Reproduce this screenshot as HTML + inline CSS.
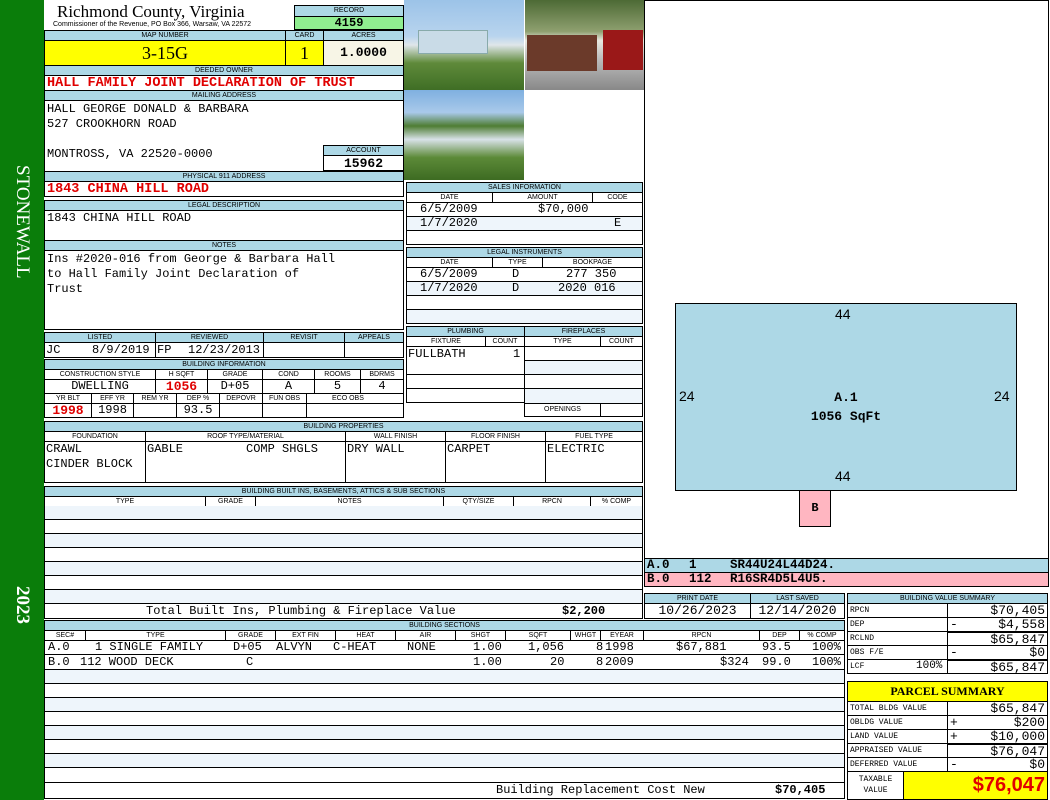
<!DOCTYPE html>
<html><head><meta charset="utf-8"><style>
*{margin:0;padding:0;box-sizing:border-box}
body{width:1050px;height:800px;position:relative;background:#fff;overflow:hidden;font-family:"Liberation Mono",monospace;font-size:12px;color:#000}
div,span{position:absolute}
.h{background:#add8e6;border:1px solid #000;font-family:"Liberation Sans",sans-serif;font-size:7px;text-align:center;line-height:9px;white-space:nowrap;overflow:hidden}
.c{border:1px solid #000;white-space:nowrap;overflow:hidden;line-height:13px;padding:0 2px}
.ct{text-align:center}.r{text-align:right}
.red{color:#e00000;font-weight:bold}
.lb{background:#eef5fb}
.rw{border-bottom:1px solid #000;border-left:1px solid #000;border-right:1px solid #000;white-space:pre}
.rw span,.c span{top:0;white-space:pre}
</style></head><body>
<div style="left:0;top:0;width:44px;height:800px;background:#0a7d0a"></div>
<div style="left:22px;top:165px;transform-origin:0 0;transform:rotate(90deg) translate(0,-9px);color:#fff;font-family:'Liberation Serif',serif;font-size:19px;white-space:nowrap;line-height:18px">STONEWALL</div>
<div style="left:22px;top:586px;transform-origin:0 0;transform:rotate(90deg) translate(0,-9px);color:#fff;font-family:'Liberation Serif',serif;font-size:19px;font-weight:bold;white-space:nowrap;line-height:18px">2023</div>

<div style="left:57px;top:2px;font-family:'Liberation Serif',serif;font-size:17px;line-height:20px">Richmond County, Virginia</div>
<div style="left:53px;top:20px;font-family:'Liberation Sans',sans-serif;font-size:7px;line-height:9px">Commissioner of the Revenue, PO Box 366, Warsaw, VA 22572</div>
<div class="h" style="left:294px;top:5px;width:110px;height:12px;line-height:10px">RECORD</div>
<div class="c ct" style="left:294px;top:16px;width:110px;height:14px;background:#90ee90;font-weight:bold;line-height:12px">4159</div>
<div class="h" style="left:44px;top:30px;width:242px;height:11px">MAP NUMBER</div>
<div class="h" style="left:285px;top:30px;width:39px;height:11px">CARD</div>
<div class="h" style="left:323px;top:30px;width:81px;height:11px">ACRES</div>
<div class="c ct" style="left:44px;top:40px;width:242px;height:26px;background:#ffff00;font-family:'Liberation Serif',serif;font-size:18px;line-height:24px">3-15G</div>
<div class="c ct" style="left:285px;top:40px;width:39px;height:26px;background:#ffff00;font-family:'Liberation Serif',serif;font-size:18px;line-height:24px">1</div>
<div class="c ct" style="left:323px;top:40px;width:81px;height:26px;background:#f7f5e6;font-weight:bold;font-size:13px;line-height:24px">1.0000</div>
<div class="h" style="left:44px;top:65px;width:360px;height:11px">DEEDED OWNER</div>
<div class="c red" style="left:44px;top:75px;width:360px;height:16px;font-size:13.5px;line-height:15px">HALL FAMILY JOINT DECLARATION OF TRUST</div>
<div class="h" style="left:44px;top:90px;width:360px;height:11px">MAILING ADDRESS</div>
<div class="c" style="left:44px;top:100px;width:360px;height:72px;line-height:15px;padding-top:1px">HALL GEORGE DONALD &amp; BARBARA<br>527 CROOKHORN ROAD<br><br>MONTROSS, VA 22520-0000</div>
<div class="h" style="left:323px;top:145px;width:81px;height:11px">ACCOUNT</div>
<div class="c ct" style="left:323px;top:155px;width:81px;height:16px;font-weight:bold;font-size:13px;line-height:15px;background:#fff">15962</div>
<div class="h" style="left:44px;top:171px;width:360px;height:11px">PHYSICAL 911 ADDRESS</div>
<div class="c red" style="left:44px;top:181px;width:360px;height:16px;font-size:13.5px;line-height:15px">1843 CHINA HILL ROAD</div>

<div style="left:404px;top:0;width:120px;height:90px;background:linear-gradient(#9cc3e8 0,#b8d4ee 40%,#dfe6ea 50%,#5f8a3a 70%,#3f6e25 100%)"><div style="left:14px;top:30px;width:70px;height:24px;background:#c9dbe7;border:1px solid #8aa"></div></div>
<div style="left:525px;top:0;width:119px;height:90px;background:linear-gradient(#4d6a35 0,#8fa070 35%,#e8e8e0 45%,#bdbdbd 65%,#888 100%)"><div style="left:2px;top:35px;width:70px;height:36px;background:#6b3a2a"></div><div style="left:78px;top:30px;width:40px;height:40px;background:#9a1818"></div></div>
<div style="left:404px;top:90px;width:120px;height:90px;background:linear-gradient(#7fb0e0 0,#a9c9ea 25%,#4e7d33 40%,#d8e2e8 55%,#5c8a38 75%,#3d6b22 100%)"></div>

<div class="h" style="left:44px;top:200px;width:360px;height:11px">LEGAL DESCRIPTION</div>
<div class="c" style="left:44px;top:210px;width:360px;height:31px;padding-top:1px">1843 CHINA HILL ROAD</div>
<div class="h" style="left:44px;top:240px;width:360px;height:11px">NOTES</div>
<div class="c" style="left:44px;top:250px;width:360px;height:80px;line-height:15px;padding-top:1px">Ins #2020-016 from George &amp; Barbara Hall<br>to Hall Family Joint Declaration of<br>Trust</div>

<div class="h" style="left:406px;top:182px;width:237px;height:11px">SALES INFORMATION</div>
<div class="c ct" style="left:406px;top:192px;width:87px;height:11px;font:7px/9px 'Liberation Sans',sans-serif">DATE</div>
<div class="c ct" style="left:492px;top:192px;width:101px;height:11px;font:7px/9px 'Liberation Sans',sans-serif">AMOUNT</div>
<div class="c ct" style="left:592px;top:192px;width:51px;height:11px;font:7px/9px 'Liberation Sans',sans-serif">CODE</div>
<div class="c" style="left:406px;top:202px;width:237px;height:15px"><span style="left:13px">6/5/2009</span><span style="left:131px">$70,000</span></div>
<div class="c lb" style="left:406px;top:216px;width:237px;height:15px"><span style="left:13px">1/7/2020</span><span style="left:207px">E</span></div>
<div class="c" style="left:406px;top:230px;width:237px;height:15px"></div>
<div class="h" style="left:406px;top:247px;width:237px;height:11px">LEGAL INSTRUMENTS</div>
<div class="c ct" style="left:406px;top:257px;width:87px;height:11px;font:7px/9px 'Liberation Sans',sans-serif">DATE</div>
<div class="c ct" style="left:492px;top:257px;width:51px;height:11px;font:7px/9px 'Liberation Sans',sans-serif">TYPE</div>
<div class="c ct" style="left:542px;top:257px;width:101px;height:11px;font:7px/9px 'Liberation Sans',sans-serif">BOOKPAGE</div>
<div class="c" style="left:406px;top:267px;width:237px;height:15px"><span style="left:13px">6/5/2009</span><span style="left:105px">D</span><span style="left:159px">277 350</span></div>
<div class="c lb" style="left:406px;top:281px;width:237px;height:15px"><span style="left:13px">1/7/2020</span><span style="left:105px">D</span><span style="left:151px">2020 016</span></div>
<div class="c" style="left:406px;top:295px;width:237px;height:15px"></div>
<div class="c lb" style="left:406px;top:309px;width:237px;height:15px"></div>

<div class="h" style="left:406px;top:326px;width:119px;height:11px">PLUMBING</div>
<div class="h" style="left:524px;top:326px;width:119px;height:11px">FIREPLACES</div>
<div class="c ct" style="left:406px;top:336px;width:80px;height:11px;font:7px/9px 'Liberation Sans',sans-serif">FIXTURE</div>
<div class="c ct" style="left:485px;top:336px;width:40px;height:11px;font:7px/9px 'Liberation Sans',sans-serif">COUNT</div>
<div class="c ct" style="left:524px;top:336px;width:77px;height:11px;font:7px/9px 'Liberation Sans',sans-serif">TYPE</div>
<div class="c ct" style="left:600px;top:336px;width:43px;height:11px;font:7px/9px 'Liberation Sans',sans-serif">COUNT</div>
<div class="c" style="left:406px;top:346px;width:119px;height:57px;padding:0"><span style="left:1px;top:1px">FULLBATH</span><span style="left:106px;top:1px">1</span></div>
<div class="c" style="left:406px;top:374px;width:119px;height:15px"></div>
<div class="c" style="left:524px;top:346px;width:119px;height:15px"></div>
<div class="c lb" style="left:524px;top:360px;width:119px;height:15px"></div>
<div class="c" style="left:524px;top:374px;width:119px;height:15px"></div>
<div class="c lb" style="left:524px;top:388px;width:119px;height:16px"></div>
<div class="c ct" style="left:524px;top:403px;width:77px;height:14px;font:7px/12px 'Liberation Sans',sans-serif">OPENINGS</div>
<div class="c" style="left:600px;top:403px;width:43px;height:14px"></div>

<div class="h" style="left:44px;top:332px;width:112px;height:11px">LISTED</div>
<div class="h" style="left:155px;top:332px;width:109px;height:11px">REVIEWED</div>
<div class="h" style="left:263px;top:332px;width:82px;height:11px">REVISIT</div>
<div class="h" style="left:344px;top:332px;width:60px;height:11px">APPEALS</div>
<div class="c" style="left:44px;top:342px;width:112px;height:16px"><span style="left:1px;top:1px">JC</span><span style="left:47px;top:1px">8/9/2019</span></div>
<div class="c" style="left:155px;top:342px;width:109px;height:16px"><span style="left:1px;top:1px">FP</span><span style="left:32px;top:1px">12/23/2013</span></div>
<div class="c" style="left:263px;top:342px;width:82px;height:16px"></div>
<div class="c" style="left:344px;top:342px;width:60px;height:16px"></div>

<div class="h" style="left:44px;top:359px;width:360px;height:11px">BUILDING INFORMATION</div>
<div class="c ct" style="left:44px;top:369px;width:112px;height:11px;font:7px/9px 'Liberation Sans',sans-serif">CONSTRUCTION STYLE</div>
<div class="c ct" style="left:155px;top:369px;width:53px;height:11px;font:7px/9px 'Liberation Sans',sans-serif">H SQFT</div>
<div class="c ct" style="left:207px;top:369px;width:56px;height:11px;font:7px/9px 'Liberation Sans',sans-serif">GRADE</div>
<div class="c ct" style="left:262px;top:369px;width:53px;height:11px;font:7px/9px 'Liberation Sans',sans-serif">COND</div>
<div class="c ct" style="left:314px;top:369px;width:47px;height:11px;font:7px/9px 'Liberation Sans',sans-serif">ROOMS</div>
<div class="c ct" style="left:360px;top:369px;width:44px;height:11px;font:7px/9px 'Liberation Sans',sans-serif">BDRMS</div>
<div class="c ct" style="left:44px;top:379px;width:112px;height:15px">DWELLING</div>
<div class="c ct red" style="left:155px;top:379px;width:53px;height:15px;font-size:13px">1056</div>
<div class="c ct" style="left:207px;top:379px;width:56px;height:15px">D+05</div>
<div class="c ct" style="left:262px;top:379px;width:53px;height:15px">A</div>
<div class="c ct" style="left:314px;top:379px;width:47px;height:15px">5</div>
<div class="c ct" style="left:360px;top:379px;width:44px;height:15px">4</div>
<div class="h" style="left:44px;top:393px;width:48px;height:11px;background:#fff">YR BLT</div>
<div class="h" style="left:91px;top:393px;width:43px;height:11px;background:#fff">EFF YR</div>
<div class="h" style="left:133px;top:393px;width:44px;height:11px;background:#fff">REM YR</div>
<div class="h" style="left:176px;top:393px;width:44px;height:11px;background:#fff">DEP %</div>
<div class="h" style="left:219px;top:393px;width:44px;height:11px;background:#fff">DEPOVR</div>
<div class="h" style="left:262px;top:393px;width:45px;height:11px;background:#fff">FUN OBS</div>
<div class="h" style="left:306px;top:393px;width:98px;height:11px;background:#fff;text-align:left;padding-left:25px">ECO OBS</div>
<div class="c ct red" style="left:44px;top:403px;width:48px;height:15px;font-size:13px">1998</div>
<div class="c ct" style="left:91px;top:403px;width:43px;height:15px">1998</div>
<div class="c" style="left:133px;top:403px;width:44px;height:15px"></div>
<div class="c ct" style="left:176px;top:403px;width:44px;height:15px">93.5</div>
<div class="c" style="left:219px;top:403px;width:44px;height:15px"></div>
<div class="c" style="left:262px;top:403px;width:45px;height:15px"></div>
<div class="c" style="left:306px;top:403px;width:98px;height:15px"></div>

<div class="h" style="left:44px;top:421px;width:599px;height:11px">BUILDING PROPERTIES</div>
<div class="c ct" style="left:44px;top:431px;width:102px;height:11px;font:7px/9px 'Liberation Sans',sans-serif">FOUNDATION</div>
<div class="c ct" style="left:145px;top:431px;width:201px;height:11px;font:7px/9px 'Liberation Sans',sans-serif">ROOF TYPE/MATERIAL</div>
<div class="c ct" style="left:345px;top:431px;width:101px;height:11px;font:7px/9px 'Liberation Sans',sans-serif">WALL FINISH</div>
<div class="c ct" style="left:445px;top:431px;width:101px;height:11px;font:7px/9px 'Liberation Sans',sans-serif">FLOOR FINISH</div>
<div class="c ct" style="left:545px;top:431px;width:98px;height:11px;font:7px/9px 'Liberation Sans',sans-serif">FUEL TYPE</div>
<div class="c" style="left:44px;top:441px;width:102px;height:42px;line-height:15px;padding:0 1px">CRAWL<br>CINDER BLOCK</div>
<div class="c" style="left:145px;top:441px;width:201px;height:42px;line-height:15px;padding:0 1px">GABLE<span style="left:100px">COMP SHGLS</span></div>
<div class="c" style="left:345px;top:441px;width:101px;height:42px;line-height:15px;padding:0 1px">DRY WALL</div>
<div class="c" style="left:445px;top:441px;width:101px;height:42px;line-height:15px;padding:0 1px">CARPET</div>
<div class="c" style="left:545px;top:441px;width:98px;height:42px;line-height:15px;padding:0 1px">ELECTRIC</div>

<div class="h" style="left:44px;top:486px;width:599px;height:11px">BUILDING BUILT INS, BASEMENTS, ATTICS &amp; SUB SECTIONS</div>
<div class="c ct" style="left:44px;top:496px;width:162px;height:11px;font:7px/9px 'Liberation Sans',sans-serif">TYPE</div>
<div class="c ct" style="left:205px;top:496px;width:51px;height:11px;font:7px/9px 'Liberation Sans',sans-serif">GRADE</div>
<div class="c ct" style="left:255px;top:496px;width:189px;height:11px;font:7px/9px 'Liberation Sans',sans-serif">NOTES</div>
<div class="c ct" style="left:443px;top:496px;width:71px;height:11px;font:7px/9px 'Liberation Sans',sans-serif">QTY/SIZE</div>
<div class="c ct" style="left:513px;top:496px;width:78px;height:11px;font:7px/9px 'Liberation Sans',sans-serif">RPCN</div>
<div class="c ct" style="left:590px;top:496px;width:53px;height:11px;font:7px/9px 'Liberation Sans',sans-serif">% COMP</div>
<div class="rw lb" style="left:44px;top:506px;width:599px;height:14px"></div>
<div class="rw" style="left:44px;top:520px;width:599px;height:14px"></div>
<div class="rw lb" style="left:44px;top:534px;width:599px;height:14px"></div>
<div class="rw" style="left:44px;top:548px;width:599px;height:14px"></div>
<div class="rw lb" style="left:44px;top:562px;width:599px;height:14px"></div>
<div class="rw" style="left:44px;top:576px;width:599px;height:14px"></div>
<div class="rw lb" style="left:44px;top:590px;width:599px;height:14px"></div>
<div class="c" style="left:44px;top:603px;width:599px;height:16px;line-height:15px"><span style="left:101px">Total Built Ins, Plumbing &amp; Fireplace Value</span><span style="left:517px;font-weight:bold">$2,200</span></div>

<div class="h" style="left:44px;top:620px;width:801px;height:11px">BUILDING SECTIONS</div>
<div style="left:44px;top:630px;width:801px;height:11px;border:1px solid #000;font:7px/9px 'Liberation Sans',sans-serif">
<div style="left:0;width:41px;text-align:center;border-right:1px solid #000;height:9px">SEC#</div>
<div style="left:41px;width:140px;text-align:center;border-right:1px solid #000;height:9px">TYPE</div>
<div style="left:181px;width:50px;text-align:center;border-right:1px solid #000;height:9px">GRADE</div>
<div style="left:231px;width:60px;text-align:center;border-right:1px solid #000;height:9px">EXT FIN</div>
<div style="left:291px;width:60px;text-align:center;border-right:1px solid #000;height:9px">HEAT</div>
<div style="left:351px;width:60px;text-align:center;border-right:1px solid #000;height:9px">AIR</div>
<div style="left:411px;width:50px;text-align:center;border-right:1px solid #000;height:9px">SHGT</div>
<div style="left:461px;width:65px;text-align:center;border-right:1px solid #000;height:9px">SQFT</div>
<div style="left:526px;width:30px;text-align:center;border-right:1px solid #000;height:9px">WHGT</div>
<div style="left:556px;width:43px;text-align:center;border-right:1px solid #000;height:9px">EYEAR</div>
<div style="left:599px;width:116px;text-align:center;border-right:1px solid #000;height:9px">RPCN</div>
<div style="left:715px;width:40px;text-align:center;border-right:1px solid #000;height:9px">DEP</div>
<div style="left:755px;width:44px;text-align:center;height:9px">% COMP</div>
</div>
<div class="rw" style="left:44px;top:640px;width:801px;height:15px;line-height:14px"><span style="left:3px">A.0</span><span style="left:50px">1 SINGLE FAMILY</span><span style="left:188px">D+05</span><span style="left:231px">ALVYN</span><span style="left:288px">C-HEAT</span><span style="left:362px">NONE</span><span style="left:428px">1.00</span><span style="left:483px">1,056</span><span style="left:551px">8</span><span style="left:560px">1998</span><span style="left:631px">$67,881</span><span style="left:717px">93.5</span><span style="left:767px">100%</span></div>
<div class="rw" style="left:44px;top:655px;width:801px;height:15px;line-height:14px"><span style="left:3px">B.0</span><span style="left:35px">112 WOOD DECK</span><span style="left:201px">C</span><span style="left:428px">1.00</span><span style="left:505px">20</span><span style="left:551px">8</span><span style="left:560px">2009</span><span style="left:675px">$324</span><span style="left:717px">99.0</span><span style="left:767px">100%</span></div>
<div class="rw lb" style="left:44px;top:670px;width:801px;height:14px"></div>
<div class="rw" style="left:44px;top:684px;width:801px;height:14px"></div>
<div class="rw lb" style="left:44px;top:698px;width:801px;height:14px"></div>
<div class="rw" style="left:44px;top:712px;width:801px;height:14px"></div>
<div class="rw lb" style="left:44px;top:726px;width:801px;height:14px"></div>
<div class="rw" style="left:44px;top:740px;width:801px;height:14px"></div>
<div class="rw lb" style="left:44px;top:754px;width:801px;height:14px"></div>
<div class="rw" style="left:44px;top:768px;width:801px;height:15px"></div>
<div class="rw" style="left:44px;top:783px;width:801px;height:16px;line-height:15px"><span style="left:451px">Building Replacement Cost New</span><span style="left:730px;font-weight:bold">$70,405</span></div>

<div style="left:644px;top:0;width:405px;height:559px;border:1px solid #000"></div>
<div style="left:675px;top:303px;width:342px;height:188px;background:#add8e6;border:1px solid #000"></div>
<div style="left:799px;top:490px;width:32px;height:37px;background:#ffb6c1;border:1px solid #000;text-align:center;line-height:35px;font-weight:bold">B</div>
<div style="left:835px;top:306px;font-family:'Liberation Sans',sans-serif;font-size:14px">44</div>
<div style="left:835px;top:468px;font-family:'Liberation Sans',sans-serif;font-size:14px">44</div>
<div style="left:679px;top:388px;font-family:'Liberation Sans',sans-serif;font-size:14px">24</div>
<div style="left:994px;top:388px;font-family:'Liberation Sans',sans-serif;font-size:14px">24</div>
<div style="left:776px;top:388px;width:140px;text-align:center;font-weight:bold;font-size:13px;line-height:19px">A.1<br>1056 SqFt</div>
<div style="left:644px;top:558px;width:405px;height:15px;background:#add8e6;border:1px solid #000;font-weight:bold;font-size:12.5px;line-height:13px;white-space:pre"><span style="left:2px">A.0</span><span style="left:44px">1</span><span style="left:85px">SR44U24L44D24.</span></div>
<div style="left:644px;top:572px;width:405px;height:15px;background:#ffb6c1;border:1px solid #000;font-weight:bold;font-size:12.5px;line-height:13px;white-space:pre"><span style="left:2px">B.0</span><span style="left:44px">112</span><span style="left:85px">R16SR4D5L4U5.</span></div>

<div class="h" style="left:644px;top:593px;width:107px;height:11px">PRINT DATE</div>
<div class="h" style="left:750px;top:593px;width:95px;height:11px">LAST SAVED</div>
<div class="c ct" style="left:644px;top:603px;width:107px;height:16px;font-size:13px;line-height:14px">10/26/2023</div>
<div class="c ct" style="left:750px;top:603px;width:95px;height:16px;font-size:13px;line-height:14px">12/14/2020</div>

<div class="h" style="left:847px;top:593px;width:201px;height:11px">BUILDING VALUE SUMMARY</div>
<div class="c" style="left:847px;top:603px;width:101px;height:15px;font-size:8px">RPCN</div><div class="c r" style="left:947px;top:603px;width:101px;height:15px;font-size:13px">$70,405</div>
<div class="c" style="left:847px;top:617px;width:101px;height:15px;font-size:8px">DEP</div><div class="c r" style="left:947px;top:617px;width:101px;height:15px;font-size:13px"><span style="left:2px">-</span>$4,558</div>
<div class="c" style="left:847px;top:631px;width:101px;height:15px;font-size:8px">RCLND</div><div class="c r" style="left:947px;top:631px;width:101px;height:15px;font-size:13px;border-top:2px solid #000">$65,847</div>
<div class="c" style="left:847px;top:645px;width:101px;height:15px;font-size:8px">OBS F/E</div><div class="c r" style="left:947px;top:645px;width:101px;height:15px;font-size:13px"><span style="left:2px">-</span>$0</div>
<div class="c" style="left:847px;top:659px;width:101px;height:15px;font-size:8px">LCF<span style="left:68px;font-size:11px">100%</span></div><div class="c r" style="left:947px;top:659px;width:101px;height:15px;font-size:13px;border-top:2px solid #000">$65,847</div>

<div class="c ct" style="left:847px;top:681px;width:201px;height:21px;background:#ffff00;font-weight:bold;font-size:12px;line-height:19px;font-family:'Liberation Serif',serif">PARCEL SUMMARY</div>
<div class="c" style="left:847px;top:701px;width:101px;height:15px;font-size:8px">TOTAL BLDG VALUE</div><div class="c r" style="left:947px;top:701px;width:101px;height:15px;font-size:13px">$65,847</div>
<div class="c" style="left:847px;top:715px;width:101px;height:15px;font-size:8px">OBLDG VALUE</div><div class="c r" style="left:947px;top:715px;width:101px;height:15px;font-size:13px"><span style="left:2px">+</span>$200</div>
<div class="c" style="left:847px;top:729px;width:101px;height:15px;font-size:8px">LAND VALUE</div><div class="c r" style="left:947px;top:729px;width:101px;height:15px;font-size:13px"><span style="left:2px">+</span>$10,000</div>
<div class="c" style="left:847px;top:743px;width:101px;height:15px;font-size:8px">APPRAISED VALUE</div><div class="c r" style="left:947px;top:743px;width:101px;height:15px;font-size:13px;border-top:2px solid #000">$76,047</div>
<div class="c" style="left:847px;top:757px;width:101px;height:15px;font-size:8px">DEFERRED VALUE</div><div class="c r" style="left:947px;top:757px;width:101px;height:15px;font-size:13px"><span style="left:2px">-</span>$0</div>
<div class="c ct" style="left:847px;top:771px;width:57px;height:29px;font-size:8px;line-height:11px;padding-top:2px">TAXABLE<br>VALUE</div>
<div class="c r" style="left:903px;top:771px;width:145px;height:29px;background:#ffff00;color:#e00000;font-family:'Liberation Sans',sans-serif;font-weight:bold;font-size:20px;line-height:27px">$76,047</div>
</body></html>
